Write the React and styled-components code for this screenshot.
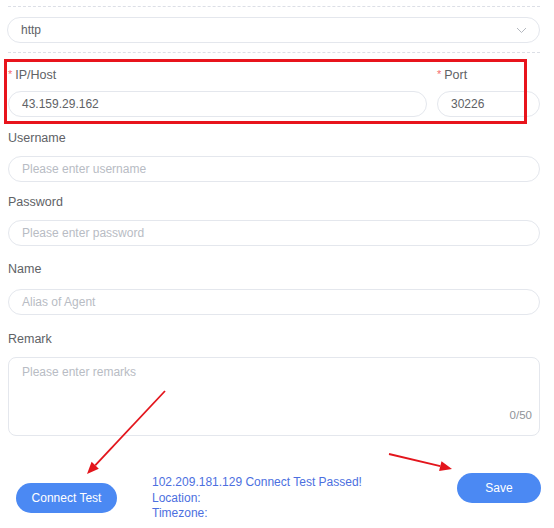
import React from 'react'
import styled, { createGlobalStyle } from 'styled-components'

const GlobalStyle = createGlobalStyle`
  html, body {
    margin: 0;
    padding: 0;
    background: #ffffff;
  }
  * {
    box-sizing: border-box;
  }
`

const Page = styled.div`
  position: relative;
  width: 554px;
  height: 528px;
  overflow: hidden;
  padding: 6px 14px 0 8px;
  font-family: "Liberation Sans", Arial, sans-serif;
  color: #606266;
`

const Divider = styled.div`
  border-top: 1px dashed #dcdfe6;
  margin-top: ${({ top }) => top}px;
`

const Select = styled.div`
  display: flex;
  align-items: center;
  justify-content: space-between;
  height: 26px;
  margin: 10px 0 0 -1px;
  padding: 0 12px 0 13px;
  border: 1px solid #e4e7ed;
  border-radius: 13px;
  font-size: 12px;
  color: #606266;
`

const Row = styled.div`
  position: relative;
  display: flex;
  gap: 10px;
  margin-top: 11px;
`

const RedFrame = styled.div`
  position: absolute;
  top: -5px;
  left: -4px;
  width: 523px;
  height: 65px;
  border: 3px solid #e8141c;
  pointer-events: none;
`

const Item = styled.div`
  display: flex;
  flex-direction: column;
  flex: ${({ grow }) => (grow ? 1 : 'none')};
  width: ${({ width }) => (width ? `${width}px` : 'auto')};
  margin-top: ${({ top }) => top || 0}px;
`

const Label = styled.div`
  height: 20px;
  line-height: 20px;
  font-size: 12.5px;
  color: #606266;
  margin-bottom: ${({ gap }) => gap || 8}px;
`

const Star = styled.span`
  color: #f56c6c;
  font-size: 11px;
  margin-right: 3px;
  vertical-align: 1px;
`

const Input = styled.div`
  height: 26px;
  line-height: 24px;
  padding: 0 13px;
  border: 1px solid #e4e7ed;
  border-radius: 13px;
  font-size: 12px;
  color: ${({ placeholder }) => (placeholder ? '#b8bcc4' : '#606266')};
`

const TextArea = styled.div`
  position: relative;
  height: 79px;
  padding: 6px 13px;
  border: 1px solid #e4e7ed;
  border-radius: 8px;
  font-size: 12px;
  line-height: 16px;
  color: #b8bcc4;
`

const Counter = styled.span`
  position: absolute;
  right: 7px;
  bottom: 12px;
  font-size: 11.5px;
  color: #909399;
`

const Footer = styled.div`
  display: flex;
  align-items: flex-start;
  margin-top: 37px;
  margin-right: -1px;
`

const Button = styled.div`
  display: flex;
  align-items: center;
  justify-content: center;
  width: ${({ width }) => width}px;
  height: 30px;
  margin-top: ${({ top }) => top || 0}px;
  margin-left: ${({ left }) => left || 0}px;
  border-radius: 15px;
  background: #4b89f3;
  color: #ffffff;
  font-size: 12px;
`

const Status = styled.div`
  margin-left: 35px;
  margin-top: 2px;
  font-size: 12px;
  line-height: 15.5px;
  color: #4c6fe0;
`

const Spacer = styled.div`
  flex: 1;
`

const Overlay = styled.svg`
  position: absolute;
  top: 0;
  left: 0;
  pointer-events: none;
`

function App () {
  return (
    <Page>
      <GlobalStyle />
      <Divider top={0} />
      <Select>
        <span>http</span>
        <svg width='11' height='7' viewBox='0 0 11 7'>
          <path d='M1 1l4.5 4.5L10 1' fill='none' stroke='#b4b8bf' strokeWidth='1' />
        </svg>
      </Select>
      <Divider top={9} />

      <Row>
        <Item grow>
          <Label gap={7}><Star>*</Star>IP/Host</Label>
          <Input>43.159.29.162</Input>
        </Item>
        <Item width={103}>
          <Label gap={7}><Star>*</Star>Port</Label>
          <Input>30226</Input>
        </Item>
        <RedFrame />
      </Row>

      <Item top={11}>
        <Label>Username</Label>
        <Input placeholder>Please enter username</Input>
      </Item>
      <Item top={10}>
        <Label>Password</Label>
        <Input placeholder>Please enter password</Input>
      </Item>
      <Item top={13}>
        <Label gap={10}>Name</Label>
        <Input placeholder>Alias of Agent</Input>
      </Item>
      <Item top={14}>
        <Label>Remark</Label>
        <TextArea>
          Please enter remarks
          <Counter>0/50</Counter>
        </TextArea>
      </Item>

      <Footer>
        <Button width={101} top={10} left={8}>Connect Test</Button>
        <Status>
          <div>102.209.181.129 Connect Test Passed!</div>
          <div>Location:</div>
          <div>Timezone:</div>
        </Status>
        <Spacer />
        <Button width={84}>Save</Button>
      </Footer>

      <Overlay width='554' height='528' viewBox='0 0 554 528'>
        <line x1='165' y1='391' x2='95.2' y2='465.3' stroke='#e3151c' strokeWidth='1.8' />
        <polygon points='87,474 98.8,468.7 91.6,461.8' fill='#e3151c' />
        <line x1='389' y1='454' x2='440.3' y2='466.2' stroke='#e3151c' strokeWidth='1.8' />
        <polygon points='452,469 439.1,471.1 441.5,461.3' fill='#e3151c' />
      </Overlay>
    </Page>
  )
}

export default App
